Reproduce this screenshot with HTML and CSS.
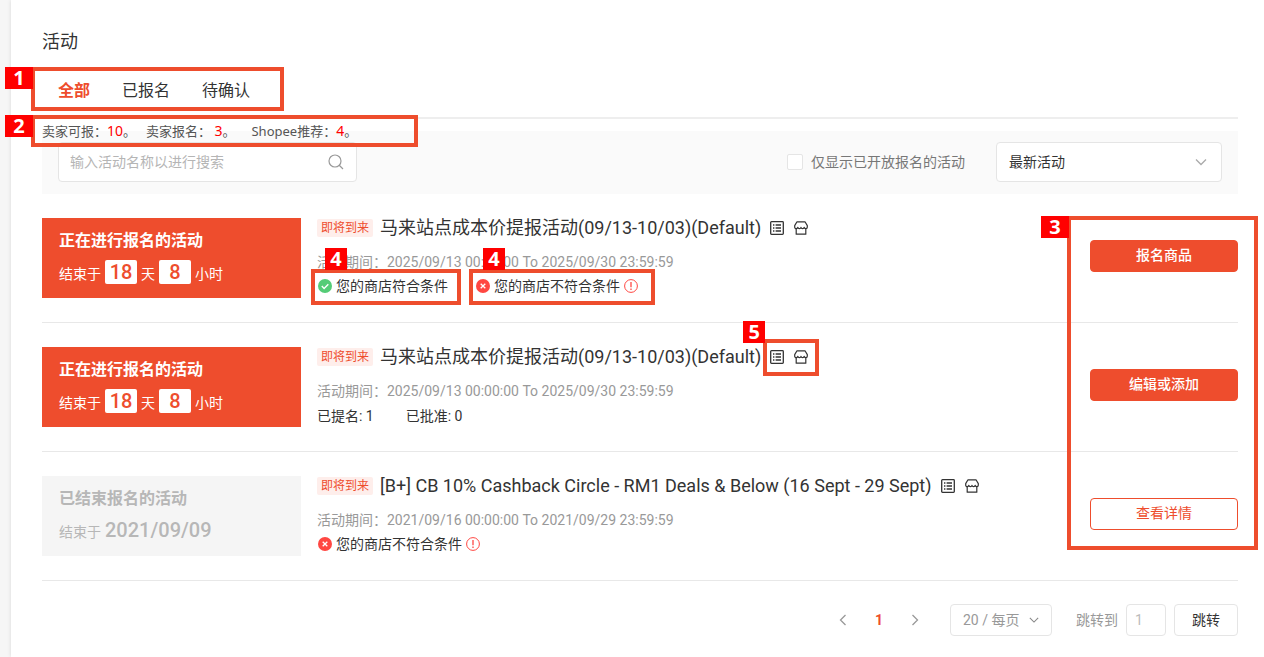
FILE: index.html
```html
<!DOCTYPE html>
<html lang="zh-CN">
<head>
<meta charset="utf-8">
<meta name="viewport" content="width=device-width, initial-scale=1">
<title>活动</title>
<link rel="stylesheet" href="styles.css">
</head>
<body>
<svg class="sprite" aria-hidden="true">
  <symbol id="i-list" viewBox="0 0 14 14"><g fill="none" stroke="currentColor" stroke-width="1.3"><rect x=".7" y=".7" width="12.6" height="12.6" rx=".8"/><path d="M3 4h1.4M5.6 4H11M3 7h1.4M5.6 7H11M3 10h1.4M5.6 10H11"/></g></symbol>
  <symbol id="i-store" viewBox="0 0 14 14"><g fill="none" stroke="currentColor" stroke-width="1.2" stroke-linejoin="round"><path d="M3 .8h8l2.300 3.800v1.600c0 .9-.7 1.400-1.500 1.400S10.300 7 10.200 6.300C10 7.200 9.400 7.600 8.600 7.600S7.200 7.100 7 6.300C6.800 7.100 6.200 7.600 5.400 7.600S4 7.200 3.800 6.300C3.700 7 3 7.600 2.200 7.600S.7 7.100.7 6.200V4.600z"/><path d="M2.200 7.600v5.600h9.600V7.600"/></g></symbol>
  <symbol id="i-ok" viewBox="0 0 14 14"><circle cx="7" cy="7" r="7" fill="#55cc77"/><path d="M3.800 7.100l2.300 2.300 4.200-4.200" fill="none" stroke="#fff" stroke-width="1.400"/></symbol>
  <symbol id="i-no" viewBox="0 0 14 14"><circle cx="7" cy="7" r="7" fill="#ff4742"/><path d="M4.700 4.700l4.600 4.600M9.300 4.700L4.700 9.300" fill="none" stroke="#fff" stroke-width="1.300"/></symbol>
  <symbol id="i-info" viewBox="0 0 14 14"><circle cx="7" cy="7" r="6.400" fill="none" stroke="#ff4742"/><path d="M7 3v5.200M7 9.500V11" stroke="#ff4742" stroke-width="1.300"/></symbol>
  <symbol id="i-down" viewBox="0 0 12 12"><path d="M1 3.500l5 5 5-5" fill="none" stroke="currentColor" stroke-width="1.300"/></symbol>
  <symbol id="i-left" viewBox="0 0 12 12"><path d="M8.500 1l-5 5 5 5" fill="none" stroke="currentColor" stroke-width="1.300"/></symbol>
  <symbol id="i-right" viewBox="0 0 12 12"><path d="M3.500 1l5 5-5 5" fill="none" stroke="currentColor" stroke-width="1.300"/></symbol>
  <symbol id="i-search" viewBox="0 0 16 16"><path d="M11.500 11.500L15 15M13 7A6 6 0 1 1 1 7a6 6 0 0 1 12 0z" fill="none" stroke="currentColor" stroke-width="1.200"/></symbol>
</svg>
<main class="panel">
  <h1 class="page-title">活动</h1>
  <nav class="tabs">
    <a class="tab active" href="#all">全部</a>
    <a class="tab" href="#joined">已报名</a>
    <a class="tab" href="#pending">待确认</a>
    <span class="mark mark-tabs"><b class="num num-wide">1</b></span>
  </nav>
  <div class="stats">
    <span>卖家可报：<em>10</em>。</span>
    <span>卖家报名： <em>3</em>。</span>
    <span class="stat-last">Shopee推荐：<em>4</em>。</span>
    <span class="mark mark-stats"><b class="num num-wide">2</b></span>
  </div>
  <form class="filter">
    <div class="search">
      <input class="search-input" type="text" aria-label="搜索活动" placeholder="输入活动名称以进行搜索">
      <svg class="search-icon"><use href="#i-search"/></svg>
    </div>
    <label class="only-open"><input class="check" type="checkbox">仅显示已开放报名的活动</label>
    <div class="pick pick-sort">
      <select class="pick-select" aria-label="排序"><option>最新活动</option></select>
      <svg class="chevron"><use href="#i-down"/></svg>
    </div>
  </form>
  <div class="list">
    <article class="row">
      <div class="banner">
        <strong class="banner-title">正在进行报名的活动</strong>
        <div class="countdown">结束于<b class="digit">18</b>天<b class="digit">8</b>小时</div>
      </div>
      <div class="body">
        <h2 class="name"><span class="tag">即将到来</span><span>马来站点成本价提报活动(09/13-10/03)(Default)</span>
          <span class="tools"><svg class="icon"><use href="#i-list"/></svg><svg class="icon"><use href="#i-store"/></svg></span></h2>
        <p class="period">活动期间：2025/09/13 00:00:00 To 2025/09/30 23:59:59</p>
        <div class="facts">
          <span class="status"><svg class="icon"><use href="#i-ok"/></svg>您的商店符合条件<span class="mark mark-ok"><b class="num num-top">4</b></span></span>
          <span class="status"><svg class="icon"><use href="#i-no"/></svg>您的商店不符合条件<svg class="icon"><use href="#i-info"/></svg><span class="mark mark-no"><b class="num num-top">4</b></span></span>
        </div>
      </div>
      <button class="action" type="button">报名商品</button>
    </article>
    <article class="row">
      <div class="banner">
        <strong class="banner-title">正在进行报名的活动</strong>
        <div class="countdown">结束于<b class="digit">18</b>天<b class="digit">8</b>小时</div>
      </div>
      <div class="body">
        <h2 class="name"><span class="tag">即将到来</span><span>马来站点成本价提报活动(09/13-10/03)(Default)</span>
          <span class="tools"><svg class="icon"><use href="#i-list"/></svg><svg class="icon"><use href="#i-store"/></svg><span class="mark mark-tools"><b class="num num-corner">5</b></span></span></h2>
        <p class="period">活动期间：2025/09/13 00:00:00 To 2025/09/30 23:59:59</p>
        <div class="facts facts-count"><span>已提名: 1</span><span>已批准: 0</span></div>
      </div>
      <button class="action" type="button">编辑或添加</button>
    </article>
    <article class="row">
      <div class="banner ended">
        <strong class="banner-title">已结束报名的活动</strong>
        <div class="countdown">结束于<b class="end-date">2021/09/09</b></div>
      </div>
      <div class="body">
        <h2 class="name"><span class="tag">即将到来</span><span>[B+] CB 10% Cashback Circle - RM1 Deals &amp; Below (16 Sept - 29 Sept)</span>
          <span class="tools"><svg class="icon"><use href="#i-list"/></svg><svg class="icon"><use href="#i-store"/></svg></span></h2>
        <p class="period">活动期间：2021/09/16 00:00:00 To 2021/09/29 23:59:59</p>
        <div class="facts">
          <span class="status"><svg class="icon"><use href="#i-no"/></svg>您的商店不符合条件<svg class="icon"><use href="#i-info"/></svg></span>
        </div>
      </div>
      <button class="action outline" type="button">查看详情</button>
    </article>
    <span class="mark mark-actions"><b class="num num-wide">3</b></span>
  </div>
  <footer class="pager">
    <div class="pages">
      <button class="page" type="button" aria-label="上一页"><svg class="arrow"><use href="#i-left"/></svg></button>
      <button class="page current" type="button">1</button>
      <button class="page" type="button" aria-label="下一页"><svg class="arrow"><use href="#i-right"/></svg></button>
    </div>
    <div class="pick pick-size">
      <select class="pick-select" aria-label="每页数量"><option>20 / 每页</option></select>
      <svg class="chevron"><use href="#i-down"/></svg>
    </div>
    <label class="jump">跳转到<input class="jump-input" type="text" value="1"></label>
    <button class="go" type="button">跳转</button>
  </footer>
</main>
</body>
</html>
```
FILE: styles.css
```css
* { box-sizing: border-box; }
body {
  margin: 0;
  padding-left: 11px;
  background: #f6f6f6;
  color: #333;
  font: 14px/20px Roboto, "Noto Sans CJK SC", sans-serif;
}
input, select, button { font: inherit; color: inherit; margin: 0; }
button { padding: 0; cursor: pointer; }
h1, h2, p { margin: 0; font-weight: 400; }
.sprite { display: none; }
.panel {
  min-height: 100vh;
  padding: 30px 26px 20px 31px;
  background: #fff;
  box-shadow: 0 0 4px rgba(0, 0, 0, .12);
}
.page-title { font-size: 18px; line-height: 24px; }

.mark { position: absolute; border: 4px solid #ee4d2d; pointer-events: none; z-index: 2; }
.num {
  position: absolute;
  width: 22px;
  height: 22px;
  background: #f00;
  color: #fff;
  font: 700 20px/22px "Open Sans", sans-serif;
  text-align: center;
}
.num-wide { top: -4px; right: calc(100% + 2px); width: 28px; }
.num-top { left: 10px; bottom: calc(100% + 3px); }
.num-corner { right: calc(100% + 2px); bottom: 100%; }

.tabs {
  position: relative;
  display: flex;
  gap: 32px;
  margin-top: 13px;
  padding: 0 16px 2px;
  border-bottom: 2px solid #eee;
  font-size: 16px;
  line-height: 48px;
}
.tab { color: inherit; text-decoration: none; }
.tab.active { color: #ee4d2d; font-weight: 700; }
.mark-tabs { left: -11px; top: 0; width: 253px; height: 44px; }

.stats {
  position: relative;
  z-index: 1;
  display: flex;
  gap: 10px;
  width: fit-content;
  margin: 2px 0 -10px;
  font: 13px/20px "Noto Sans", "Noto Sans CJK SC", sans-serif;
  color: #555;
}
.stats em { color: #f00; font-size: 14px; font-style: normal; }
.stat-last { margin-left: 6px; }
.mark-stats { left: -11px; top: -6px; width: 387px; height: 32px; }

.filter {
  display: flex;
  align-items: center;
  padding: 11px 16px 12px;
  background: #fafafa;
}
.search { position: relative; width: 299px; margin-right: auto; }
.search-input {
  width: 100%;
  height: 40px;
  padding: 0 40px 0 11px;
  border: 1px solid #e5e5e5;
  border-radius: 4px;
  background: #fff;
}
.search-input::placeholder { color: #b5b5b5; }
.search-icon { position: absolute; right: 13px; top: 12px; width: 16px; height: 16px; color: #999; }
.only-open { display: flex; align-items: center; gap: 8px; margin-right: 31px; color: #777; }
.check {
  appearance: none;
  width: 16px;
  height: 16px;
  border: 1px solid #e5e5e5;
  border-radius: 2px;
  background: #fff;
}
.pick { position: relative; }
.pick-select {
  appearance: none;
  width: 100%;
  height: 40px;
  padding: 0 12px;
  border: 1px solid #e5e5e5;
  border-radius: 4px;
  background: #fff;
}
.pick-sort { width: 226px; }
.chevron { position: absolute; right: 15px; top: 0; width: 12px; height: 100%; color: #aaa; pointer-events: none; }

.list { position: relative; }
.row { display: flex; align-items: flex-start; padding: 24px 0; border-bottom: 1px solid #e8e8e8; }
.banner { flex: none; width: 259px; height: 80px; padding: 13px 17px; background: #ee4d2d; color: #fff; }
.banner-title { display: block; font-size: 16px; }
.countdown { display: flex; align-items: baseline; gap: 4px; margin-top: 9px; }
.digit {
  width: 32px;
  border-radius: 2px;
  background: #fff;
  color: #ee4d2d;
  font-size: 20px;
  font-weight: 500;
  line-height: 24px;
  text-align: center;
}
.ended { background: #f5f5f5; color: #b7b7b7; }
.end-date { font-size: 20px; font-weight: 500; line-height: 24px; }
.body { flex: 1; min-width: 0; padding-left: 16px; }
.name { display: flex; align-items: center; height: 20px; font-size: 18px; }
.tag {
  margin-right: 7px;
  padding: 0 4px;
  border-radius: 2px;
  background: #feeeeb;
  color: #ee4d2d;
  font-size: 12px;
  line-height: 18px;
}
.tools { position: relative; display: flex; gap: 10px; margin-left: 9px; }
.icon { flex: none; display: block; width: 14px; height: 14px; }
.mark-tools { left: -7px; top: -11px; width: 56px; height: 37px; }
.period { margin-top: 14px; color: #999; }
.facts { display: flex; gap: 27px; margin-top: 4px; }
.facts-count { gap: 32px; margin-top: 5px; }
.status { position: relative; display: flex; align-items: center; gap: 4px; padding-left: 1px; }
.mark-ok { left: -6px; top: -7px; width: 150px; height: 36px; }
.mark-no { left: -6px; top: -7px; width: 186px; height: 36px; }
.action {
  flex: none;
  width: 148px;
  height: 32px;
  margin-top: 22px;
  padding-bottom: 2px;
  border: 1px solid #ee4d2d;
  border-radius: 4px;
  background: #ee4d2d;
  color: #fff;
  font-weight: 500;
}
.outline { background: #fff; color: #ee4d2d; font-weight: 400; }
.mark-actions { right: -20px; top: 22px; bottom: 31px; width: 191px; }

.pager { display: flex; align-items: center; justify-content: flex-end; margin-top: 23px; color: #999; }
.pages { display: flex; margin-right: 17px; }
.page { display: flex; align-items: center; justify-content: center; width: 36px; height: 32px; border: 0; background: none; }
.current { color: #ee4d2d; font-weight: 700; }
.arrow { width: 12px; height: 12px; }
.pick-size { width: 102px; }
.pick-size .pick-select { height: 32px; }
.pick-size .chevron { right: 13px; width: 10px; color: #888; }
.jump { display: flex; align-items: center; gap: 8px; margin: 0 8px 0 24px; }
.jump-input { width: 40px; height: 32px; padding: 0 8px; border: 1px solid #e5e5e5; border-radius: 4px; color: #bbb; }
.go { width: 64px; height: 32px; border: 1px solid #e5e5e5; border-radius: 4px; background: #fff; color: #333; }
```
